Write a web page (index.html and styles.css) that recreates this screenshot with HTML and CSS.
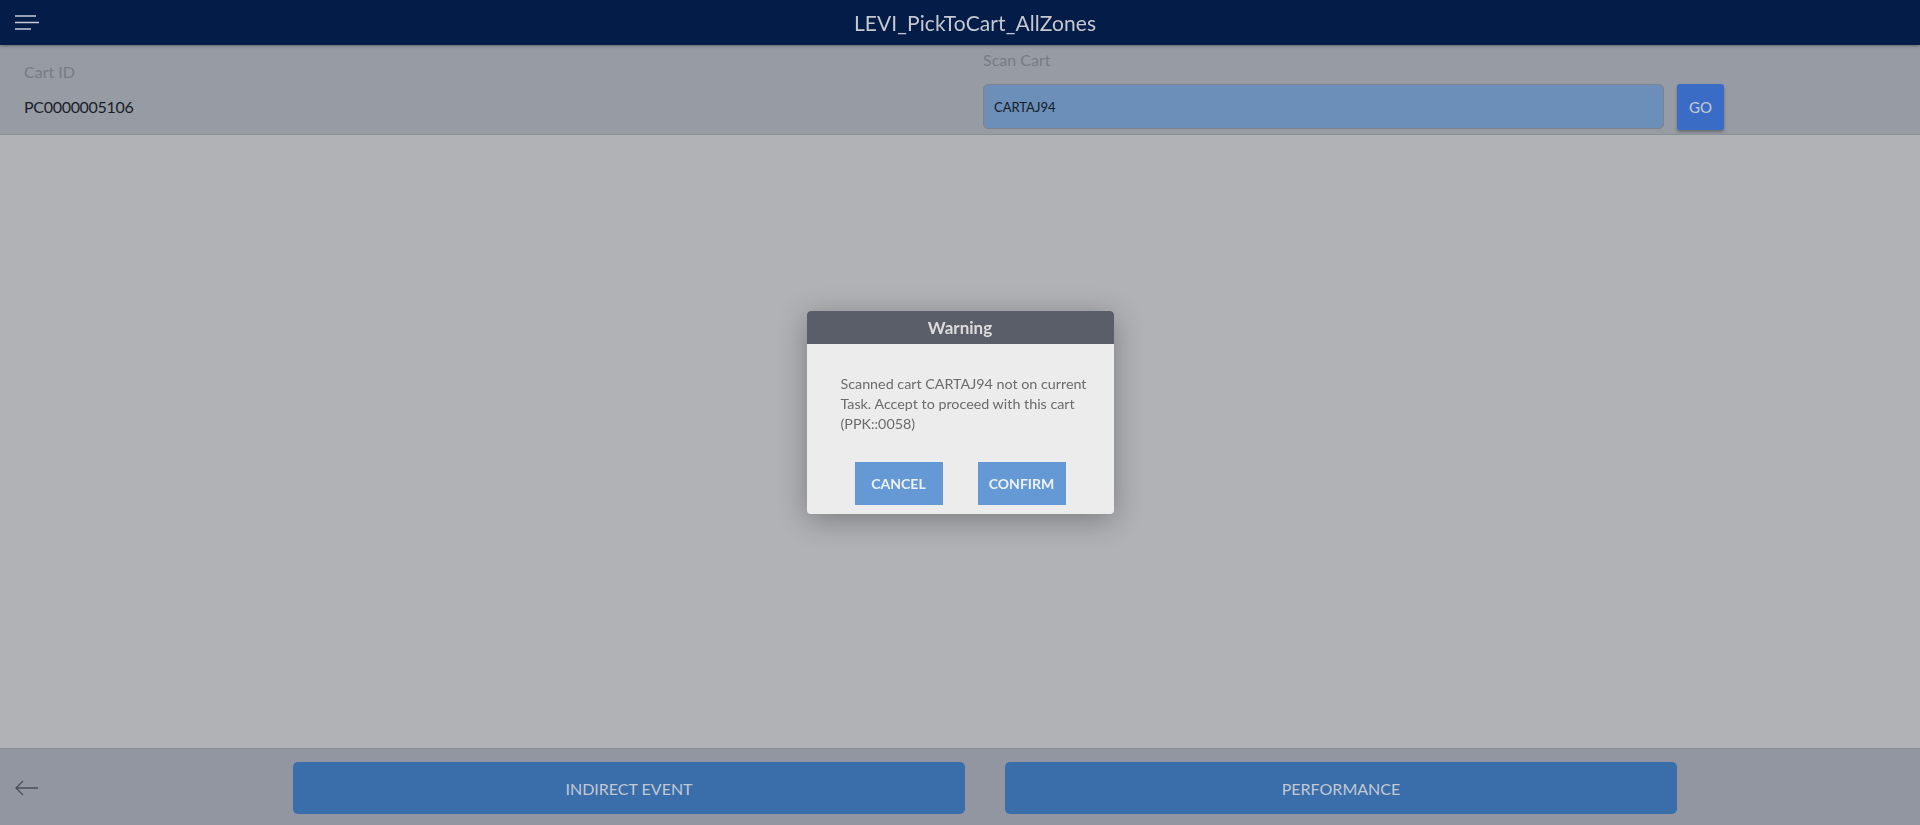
FILE: index.html
```html
<!DOCTYPE html>
<html>
<head>
<meta charset="utf-8">
<link rel="stylesheet" href="styles.css">
</head>
<body>
<div class="app">
  <header class="header">
    <svg class="menu" width="24" height="16" viewBox="0 0 24 16">
      <path d="M0 1h21M0 7.5h24M0 14h16" stroke="#c9ccd3" stroke-width="1.3" fill="none"/>
    </svg>
    <div class="title">LEVI_PickToCart_AllZones</div>
  </header>
  <section class="topbar">
    <div class="cart-col">
      <div class="label">Cart ID</div>
      <div class="value">PC0000005106</div>
    </div>
    <div class="scan-col">
      <div class="label scan-label">Scan Cart</div>
      <div class="scan-row">
        <div class="input">CARTAJ94</div>
        <div class="go">GO</div>
      </div>
    </div>
  </section>
  <main class="main"></main>
  <footer class="footer">
    <svg class="back" width="24" height="16" viewBox="0 0 24 16">
      <path d="M23 8H1M8 1L1 8l7 7" stroke="#4a4e58" stroke-width="1.3" fill="none"/>
    </svg>
    <div class="actions">
      <div class="action">INDIRECT EVENT</div>
      <div class="action">PERFORMANCE</div>
    </div>
  </footer>
</div>
<div class="overlay">
  <div class="dialog">
    <div class="dialog-head">Warning</div>
    <div class="dialog-body">Scanned cart CARTAJ94 not on current Task. Accept to proceed with this cart (PPK::0058)</div>
    <div class="dialog-actions">
      <div class="dbtn">CANCEL</div>
      <div class="dbtn">CONFIRM</div>
    </div>
  </div>
</div>
</body>
</html>
```

FILE: styles.css
```css
html, body {
  margin: 0;
  padding: 0;
}
body {
  font-family: "Lato", "Open Sans", sans-serif;
  width: 1920px;
  height: 825px;
  overflow: hidden;
}
.app {
  display: flex;
  flex-direction: column;
  height: 825px;
}
.header {
  height: 45px;
  background: #041c48;
  display: flex;
  align-items: center;
  justify-content: center;
  padding-left: 30px;
  position: relative;
  box-shadow: 0 1px 3px rgba(0,0,0,0.35);
  z-index: 2;
}
.menu {
  position: absolute;
  left: 15px;
  top: 15px;
}
.title {
  color: #c5c8cf;
  font-size: 21px;
  letter-spacing: 0.1px;
}
.topbar {
  height: 90px;
  background: #979ba3;
  display: flex;
  border-bottom: 1px solid #8b8f97;
  box-sizing: border-box;
}
.cart-col {
  width: 960px;
  padding: 17px 24px 0;
  box-sizing: border-box;
}
.label {
  color: #777b83;
  font-size: 16px;
  line-height: 20px;
}
.value {
  color: #1a1e2a;
  font-size: 16px;
  letter-spacing: -0.3px;
  line-height: 20px;
  margin-top: 15px;
}
.scan-col {
  padding: 5px 0 0 23px;
}
.scan-label {
  line-height: 20px;
}
.scan-row {
  display: flex;
  margin-top: 14px;
  gap: 13px;
}
.input {
  width: 681px;
  height: 45px;
  box-sizing: border-box;
  border: 1px solid #7f838b;
  border-radius: 5px;
  background: #6b8fb8;
  color: #141a28;
  font-size: 13px;
  display: flex;
  align-items: center;
  padding-left: 10px;
}
.go {
  width: 47px;
  height: 46px;
  background: #3a6cc5;
  border-radius: 3px;
  color: #c6ccd6;
  font-size: 15px;
  display: flex;
  align-items: center;
  justify-content: center;
  box-shadow: 0 2px 3px rgba(0,0,0,0.3);
}
.main {
  flex: 1;
  background: #b1b2b6;
}
.footer {
  height: 77px;
  background: #9196a0;
  display: flex;
  position: relative;
  border-top: 1px solid #8a8f98;
  box-sizing: border-box;
}
.back {
  position: absolute;
  left: 15px;
  top: 31px;
}
.actions {
  display: flex;
  gap: 40px;
  padding: 13px 0 0 293px;
}
.action {
  width: 672px;
  height: 52px;
  background: #3a6eab;
  border-radius: 5px;
  color: #c2c8d2;
  font-size: 16px;
  display: flex;
  align-items: center;
  justify-content: center;
}
.overlay {
  position: fixed;
  inset: 0;
  display: flex;
  align-items: center;
  justify-content: center;
}
.dialog {
  width: 307px;
  height: 203px;
  background: #ececec;
  border-radius: 4px;
  overflow: hidden;
  box-shadow: 0 6px 30px rgba(0,0,0,0.3);
  display: flex;
  flex-direction: column;
}
.dialog-head {
  height: 33px;
  background: #5a5e68;
  color: #dcdcdc;
  font-size: 17px;
  font-weight: 700;
  display: flex;
  align-items: center;
  justify-content: center;
}
.dialog-body {
  padding: 30px 18px 0 34px;
  color: #6b6b6b;
  font-size: 14.3px;
  line-height: 20px;
  height: 88px;
}
.dialog-actions {
  display: flex;
  gap: 35px;
  padding-left: 48px;
}
.dbtn {
  width: 88px;
  height: 43px;
  background: #6499d6;
  color: #eef2f8;
  font-size: 14px;
  font-weight: 700;
  display: flex;
  align-items: center;
  justify-content: center;
}
```
